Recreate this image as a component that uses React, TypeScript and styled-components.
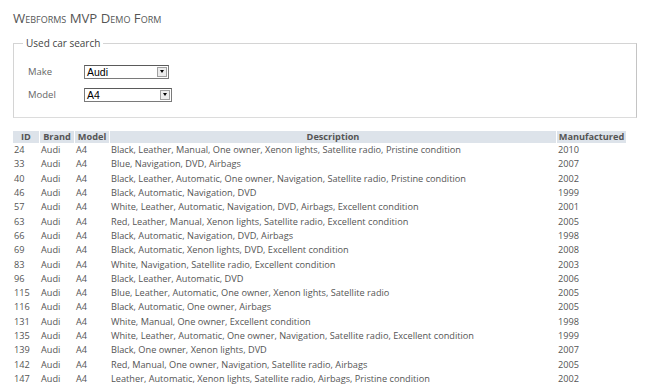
import { createGlobalStyle } from "styled-components";
import styled from "styled-components";

const GlobalStyle = createGlobalStyle`
  html, body {
    margin: 0;
    padding: 0;
    background: #fff;
  }
  body {
    font-family: "Open Sans", "Noto Sans", sans-serif;
    font-size: 9.2px;
    color: #555;
  }
`;

const cars = [
  [24, "Black, Leather, Manual, One owner, Xenon lights, Satellite radio, Pristine condition", 2010],
  [33, "Blue, Navigation, DVD, Airbags", 2007],
  [40, "Black, Leather, Automatic, One owner, Navigation, Satellite radio, Pristine condition", 2002],
  [46, "Black, Automatic, Navigation, DVD", 1999],
  [57, "White, Leather, Automatic, Navigation, DVD, Airbags, Excellent condition", 2001],
  [63, "Red, Leather, Manual, Xenon lights, Satellite radio, Excellent condition", 2005],
  [66, "Black, Automatic, Navigation, DVD, Airbags", 1998],
  [69, "Black, Automatic, Xenon lights, DVD, Excellent condition", 2008],
  [83, "White, Navigation, Satellite radio, Excellent condition", 2003],
  [96, "Black, Leather, Automatic, DVD", 2006],
  [115, "Blue, Leather, Automatic, One owner, Xenon lights, Satellite radio", 2005],
  [116, "Black, Automatic, One owner, Airbags", 2005],
  [131, "White, Manual, One owner, Excellent condition", 1998],
  [135, "White, Leather, Automatic, One owner, Navigation, Satellite radio, Excellent condition", 1999],
  [139, "Black, One owner, Xenon lights, DVD", 2007],
  [142, "Red, Manual, One owner, Navigation, Satellite radio, Airbags", 2005],
  [147, "Leather, Automatic, Xenon lights, Satellite radio, Airbags, Pristine condition", 2002],
] as const;

const columns = [
  { label: "ID", width: 26 },
  { label: "Brand", width: 34 },
  { label: "Model", width: 34 },
  { label: "Description", width: 446 },
  { label: "Manufactured", width: 69 },
];

const Page = styled.div`
  padding: 8px 9px 0 13px;
`;

const Title = styled.h1`
  margin: 0 0 8px 0;
  font-family: "Open Sans", "Noto Sans", sans-serif;
  font-variant: small-caps;
  font-weight: normal;
  font-size: 13.2px;
  line-height: 20px;
  color: #555;
`;

const Fieldset = styled.fieldset`
  margin: 0 0 13px 0;
  padding: 4px 15px 11px 14px;
  border: 1px solid #d4d4d4;
  border-right-color: #c4c4c4;
  border-bottom-color: #dcdcdc;
`;

const Legend = styled.legend`
  padding: 0 3px;
  margin-left: -5px;
  font-size: 10px;
  color: #444;
`;

const FormRow = styled.div`
  display: flex;
  align-items: center;
  height: 23px;
`;

const Label = styled.span`
  width: 56px;
  font-size: 9.5px;
  color: #666;
`;

const Select = styled.div<{ $w: number }>`
  display: flex;
  align-items: stretch;
  width: ${(p) => p.$w}px;
  height: 12px;
  border: 1px solid #7a7a7a;
  border-top-color: #5a5a5a;
  background: #fff;
  font-family: "Liberation Sans", Arial, sans-serif;
  font-size: 10.5px;
  color: #000;
`;

const SelectText = styled.span`
  flex: 1;
  padding-left: 2px;
  line-height: 12px;
`;

const DropButton = styled.span`
  width: 10px;
  margin: 1px;
  background: #ececec;
  border: 1px solid #a0a0a0;
  box-sizing: border-box;
  display: flex;
  align-items: center;
  justify-content: center;
  &::after {
    content: "";
    border-left: 2.5px solid transparent;
    border-right: 2.5px solid transparent;
    border-top: 3px solid #000;
  }
`;

const Spacer = styled.div`
  height: 6px;
`;

const Table = styled.table`
  width: 615px;
  table-layout: fixed;
  border-collapse: separate;
  border-spacing: 1px 0;
  margin-left: -1px;
`;

const Th = styled.th`
  background: #dde3ea;
  font-weight: bold;
  color: #555;
  text-align: center;
  padding: 0 1px;
  height: 12px;
  line-height: 12px;
  white-space: nowrap;
  overflow: hidden;
`;

const Td = styled.td`
  padding: 0 1px;
  height: 14.3px;
  line-height: 14px;
  white-space: nowrap;
  color: #555;
`;

export default function App() {
  return (
    <Page>
      <GlobalStyle />
      <Title>Webforms MVP Demo Form</Title>
      <Fieldset>
        <Legend>Used car search</Legend>
        <Spacer />
        <FormRow>
          <Label>Make</Label>
          <Select $w={83}>
            <SelectText>Audi</SelectText>
            <DropButton />
          </Select>
        </FormRow>
        <FormRow>
          <Label>Model</Label>
          <Select $w={86}>
            <SelectText>A4</SelectText>
            <DropButton />
          </Select>
        </FormRow>
      </Fieldset>
      <Table>
        <colgroup>
          {columns.map((c) => (
            <col key={c.label} style={{ width: c.width }} />
          ))}
        </colgroup>
        <thead>
          <tr>
            {columns.map((c) => (
              <Th key={c.label}>{c.label}</Th>
            ))}
          </tr>
        </thead>
        <tbody>
          {cars.map(([id, desc, year]) => (
            <tr key={id}>
              <Td>{id}</Td>
              <Td>Audi</Td>
              <Td>A4</Td>
              <Td>{desc}</Td>
              <Td>{year}</Td>
            </tr>
          ))}
        </tbody>
      </Table>
    </Page>
  );
}
